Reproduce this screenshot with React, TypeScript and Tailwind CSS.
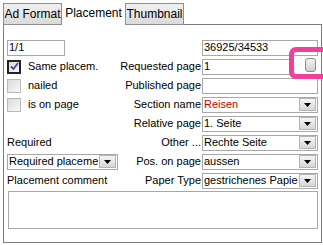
import React from 'react';

function DropButton() {
  return (
    <div className="w-[17px] h-[13px] mr-px border border-[#b4b4b4] bg-gradient-to-b from-[#f6f6f6] to-[#d6d6d6] flex items-center justify-center shrink-0">
      <svg width="7" height="4" viewBox="0 0 7 4">
        <path d="M0 0h7L3.5 4z" fill="#000" />
      </svg>
    </div>
  );
}

function Select({ value, red, className = '' }: { value: string; red?: boolean; className?: string }) {
  return (
    <div className={`h-[16px] border border-[#a8a8a8] bg-white flex items-center ${className}`}>
      <span className={`flex-1 pl-px leading-none overflow-hidden whitespace-nowrap ${red ? 'text-[#c00000]' : ''}`}>
        {value}
      </span>
      <DropButton />
    </div>
  );
}

function Input({ value = '', className = '' }: { value?: string; className?: string }) {
  return (
    <div className={`h-[16px] border border-[#a8a8a8] bg-white flex items-center pl-px leading-none whitespace-nowrap ${className}`}>
      {value}
    </div>
  );
}

function Check({ checked, focus, label }: { checked?: boolean; focus?: boolean; label: string }) {
  return (
    <div className="flex items-center gap-[7px] whitespace-nowrap">
      <div
        className={`w-[14px] h-[14px] flex items-center justify-center bg-gradient-to-br from-[#dcdcdc] to-[#f8f8f8] ${
          focus ? 'border-2 border-[#222]' : 'border border-[#b8b8b8]'
        }`}
      >
        {checked && (
          <svg width="9" height="9" viewBox="0 0 9 9">
            <path d="M1 4.5l2.5 2.5L8 1" stroke="#3a4ea8" strokeWidth="1.8" fill="none" />
          </svg>
        )}
      </div>
      <span>{label}</span>
    </div>
  );
}

function Row({ left, label, field }: { left?: React.ReactNode; label?: string; field: React.ReactNode }) {
  return (
    <div className="grid grid-cols-[113px_82px_116px] items-center h-[19px]">
      <div className="whitespace-nowrap">{left}</div>
      <div className="text-right pr-px whitespace-nowrap">{label}</div>
      <div>{field}</div>
    </div>
  );
}

export default function App() {
  return (
    <div className="w-[323px] h-[245px] bg-white relative text-[11px] text-black font-['Liberation_Sans',Arial,sans-serif] overflow-hidden">
      {/* tabs */}
      <div className="flex items-end h-[25px] pl-[3px] text-[12px] whitespace-nowrap">
        <div className="w-[59px] h-[22px] border border-[#8e8e8e] bg-gradient-to-b from-[#f0f0f0] to-[#dadada] flex items-center justify-center">
          Ad Format
        </div>
        <div className="w-[63px] h-[25px] bg-white -mb-px relative z-10 flex items-start justify-center pt-[3px]">
          Placement
        </div>
        <div className="w-[59px] h-[22px] border border-[#8e8e8e] bg-gradient-to-b from-[#f0f0f0] to-[#dadada] flex items-center justify-center">
          Thumbnail
        </div>
      </div>

      {/* panel */}
      <div className="ml-[3px] -mt-px w-[319px] h-[219px] border border-[#7c7c7c] pl-[3px] pt-[13px]">
        <Row left={<Input value="1/1" className="w-[58px]" />} field={<Input value="36925/34533" />} />
        <Row
          left={<Check checked focus label="Same placem." />}
          label="Requested page"
          field={<Input value="1" className="w-[89px]" />}
        />
        <Row left={<Check label="nailed" />} label="Published page" field={<Input />} />
        <Row left={<Check label="is on page" />} label="Section name" field={<Select value="Reisen" red />} />
        <Row label="Relative page" field={<Select value="1. Seite" />} />
        <Row left={<span>Required</span>} label="Other ..." field={<Select value="Rechte Seite" />} />
        <Row
          left={<Select value="Required placeme" className="w-[111px]" />}
          label="Pos. on page"
          field={<Select value="aussen" />}
        />
        <Row left={<span>Placement comment</span>} label="Paper Type" field={<Select value="gestrichenes Papie" />} />
        <div className="ml-px mt-px w-[310px] h-[38px] border border-[#a8a8a8]" />
      </div>

      {/* highlighted small button */}
      <div className="absolute left-[305px] top-[58px] w-[11px] h-[14px] rounded-[3px] border border-[#8a8a8a] bg-gradient-to-b from-[#f4f4f4] to-[#d0d0d0]" />
      <div className="absolute left-[289px] top-[47px] w-[44px] h-[32px] border-[5px] border-[#f0409c] rounded-[7px]" />
    </div>
  );
}
